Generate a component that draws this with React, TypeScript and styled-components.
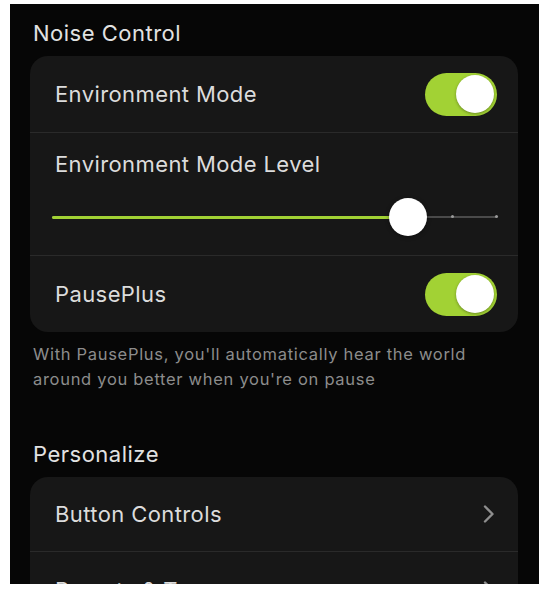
import * as React from 'react';
import styled, { createGlobalStyle } from 'styled-components';

const GREEN = '#a2d234';

const GlobalStyle = createGlobalStyle`
  html, body {
    margin: 0;
    padding: 0;
    background: #ffffff;
  }
  body {
    font-family: Inter, "Noto Sans", "Liberation Sans", sans-serif;
    -webkit-font-smoothing: antialiased;
  }
`;

export default function App() {
  return (
    <>
      <GlobalStyle />
      <Screen>
        <SectionTitle>Noise Control</SectionTitle>
        <Card>
          <Row height={76}>
            <Label>Environment Mode</Label>
            <Toggle on />
          </Row>
          <SliderRow>
            <Label>Environment Mode Level</Label>
            <Slider value={0.8} ticks={[0.9, 1]} />
          </SliderRow>
          <Row height={77}>
            <Label>PausePlus</Label>
            <Toggle on />
          </Row>
        </Card>
        <Footnote>
          With PausePlus, you'll automatically hear the world
          <br />
          around you better when you're on pause
        </Footnote>

        <SectionTitle spaced>Personalize</SectionTitle>
        <Card>
          <Row height={74}>
            <Label>Button Controls</Label>
            <Chevron />
          </Row>
          <Row height={76}>
            <Label>Presets &amp; Tone</Label>
            <Chevron />
          </Row>
        </Card>
      </Screen>
    </>
  );
}

function Toggle({ on }: { on?: boolean }) {
  return (
    <Track on={on}>
      <Knob />
    </Track>
  );
}

function Slider({ value, ticks }: { value: number; ticks: number[] }) {
  return (
    <SliderBox>
      <SliderLine />
      <SliderFill style={{ width: `${value * 100}%` }} />
      {ticks.map((t) => (
        <Tick key={t} style={{ left: `${t * 100}%` }} />
      ))}
      <Thumb style={{ left: `${value * 100}%` }} />
    </SliderBox>
  );
}

function Chevron() {
  return (
    <ChevronIcon width="12" height="20" viewBox="0 0 12 20">
      <path
        d="M2 2.5 L9.5 10 L2 17.5"
        fill="none"
        stroke="#8e8e8e"
        strokeWidth="2.4"
        strokeLinecap="round"
        strokeLinejoin="round"
      />
    </ChevronIcon>
  );
}

const Screen = styled.div`
  margin: 4px 0 0 10px;
  width: 529px;
  height: 580px;
  overflow: hidden;
  background: #060606;
  padding: 15px 21px 0 20px;
  box-sizing: border-box;
  display: flex;
  flex-direction: column;
`;

const SectionTitle = styled.div<{ spaced?: boolean }>`
  color: #e2e2e2;
  font-size: 22px;
  letter-spacing: 0.5px;
  line-height: 28px;
  font-weight: 400;
  padding-left: 3px;
  margin-top: ${(p) => (p.spaced ? '48px' : '0')};
  margin-bottom: 9px;
`;

const Card = styled.div`
  background: #171717;
  border-radius: 18px;
  display: flex;
  flex-direction: column;
  flex-shrink: 0;
  overflow: hidden;

  & > * + * {
    border-top: 1px solid #2a2a2a;
  }
`;

const Row = styled.div<{ height: number }>`
  height: ${(p) => p.height}px;
  box-sizing: border-box;
  display: flex;
  align-items: center;
  justify-content: space-between;
  padding: 0 21px 0 25px;
`;

const SliderRow = styled.div`
  height: 123px;
  box-sizing: border-box;
  display: flex;
  flex-direction: column;
  padding: 17px 21px 0 22px;
  gap: 20px;

  & > span {
    padding-left: 3px;
  }
`;

const Label = styled.span`
  color: #dcdcdc;
  font-size: 22px;
  letter-spacing: 0.4px;
  line-height: 28px;
  font-weight: 400;
`;

const Track = styled.div<{ on?: boolean }>`
  width: 72px;
  height: 43px;
  border-radius: 22px;
  background: ${(p) => (p.on ? GREEN : '#3a3a3a')};
  display: flex;
  align-items: center;
  justify-content: ${(p) => (p.on ? 'flex-end' : 'flex-start')};
  padding: 0 3px;
  box-sizing: border-box;
  flex-shrink: 0;
`;

const Knob = styled.div`
  width: 38px;
  height: 38px;
  border-radius: 50%;
  background: #ffffff;
  box-shadow: 0 1px 3px rgba(0, 0, 0, 0.35);
`;

const SliderBox = styled.div`
  position: relative;
  height: 38px;
`;

const SliderLine = styled.div`
  position: absolute;
  left: 0;
  right: 0;
  top: 18px;
  height: 2px;
  background: #4a4a4a;
`;

const SliderFill = styled.div`
  position: absolute;
  left: 0;
  top: 17.5px;
  height: 3px;
  border-radius: 2px;
  background: ${GREEN};
`;

const Tick = styled.div`
  position: absolute;
  top: 17px;
  width: 3px;
  height: 3px;
  margin-left: -2px;
  border-radius: 50%;
  background: #9a9a9a;
`;

const Thumb = styled.div`
  position: absolute;
  top: 0;
  width: 38px;
  height: 38px;
  margin-left: -19px;
  border-radius: 50%;
  background: #ffffff;
  box-shadow: 0 1px 4px rgba(0, 0, 0, 0.4);
`;

const Footnote = styled.p`
  margin: 10px 0 0 0;
  padding-left: 3px;
  color: #8c8c8c;
  font-size: 16.5px;
  letter-spacing: 0.7px;
  line-height: 25px;
`;

const ChevronIcon = styled.svg`
  flex-shrink: 0;
  margin-right: 2px;
`;
